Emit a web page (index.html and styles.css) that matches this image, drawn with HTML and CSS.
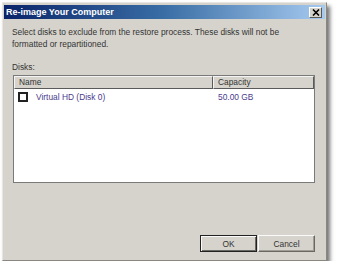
FILE: index.html
```html
<!DOCTYPE html>
<html lang="en">
<head>
  <meta charset="UTF-8">
  <title>Re-image Your Computer</title>
  <link rel="stylesheet" href="styles.css">
</head>
<body>

  <div class="dialog">
    <div class="titlebar">
      <span class="title">Re-image Your Computer</span>
      <button class="close" aria-label="Close">
        <svg width="8" height="7" viewBox="0 0 8 7"><path d="M1 0.5 L7 6.5 M7 0.5 L1 6.5" stroke="#000" stroke-width="1.6"/></svg>
      </button>
    </div>

    <div class="content">
      <p class="intro">Select disks to exclude from the restore process. These disks will not be formatted or repartitioned.</p>

      <p class="label">Disks:</p>

      <div class="listview">
        <div class="header">
          <div class="col name">Name</div>
          <div class="col capacity">Capacity</div>
        </div>
        <div class="row">
          <div class="cell name"><span class="check"></span>Virtual HD (Disk 0)</div>
          <div class="cell capacity">50.00 GB</div>
        </div>
      </div>

      <div class="buttons">
        <button class="btn default">OK</button>
        <button class="btn">Cancel</button>
      </div>
    </div>
  </div>

</body>
</html>
```

FILE: styles.css
```css
/* General Reset */
* {
  margin: 0;
  padding: 0;
  box-sizing: border-box;
}

body {
  font-family: 'Liberation Sans', Arial, sans-serif;
  font-size: 8.4px;
  color: #222;
  background-color: #fff;
  padding: 2px 0 0 2px;
}

/* Dialog frame */
.dialog {
  width: 325px;
  height: 259px;
  background-color: #d6d3cd;
  border: 1px solid #8a8780;
  border-top-color: #e8e6e2;
  border-left-color: #e8e6e2;
  box-shadow: 3px 4px 4px rgba(0, 0, 0, 0.55);
  padding: 1px;
  display: flex;
  flex-direction: column;
}

.titlebar {
  height: 14px;
  margin-top: 1px;
  background: linear-gradient(to right, #0a246a, #3a6ea5 50%, #a6caf0);
  display: flex;
  align-items: center;
  justify-content: space-between;
  padding: 0 3px 0 2px;
}

.title {
  color: #fff;
  font-weight: bold;
  font-size: 9px;
}

.close {
  width: 13px;
  height: 11px;
  background-color: #d6d3cd;
  border: 1px solid #5a5852;
  border-top-color: #fff;
  border-left-color: #fff;
  display: flex;
  align-items: center;
  justify-content: center;
}

/* Content */
.content {
  flex: 1;
  padding: 7px 9px 7px 8px;
  display: flex;
  flex-direction: column;
}

.intro {
  line-height: 12px;
  padding-right: 24px;
  color: #333;
}

.label {
  margin-top: 11px;
  line-height: 12px;
  color: #333;
}

.listview {
  margin-top: 2px;
  margin-left: 1px;
  margin-right: 1px;
  height: 108px;
  background-color: #fff;
  border: 1px solid #7a7a7a;
}

.header {
  display: flex;
  height: 13px;
}

.header .col {
  background-color: #d6d3cd;
  border: 1px solid #808080;
  border-top-color: #f4f4f4;
  border-left-color: #f4f4f4;
  border-right-color: #5a5a5a;
  border-bottom-color: #5a5a5a;
  padding-left: 4px;
  line-height: 11px;
  color: #333;
}

.name {
  width: 199px;
}

.capacity {
  flex: 1;
}

.row {
  display: flex;
  height: 16px;
  align-items: center;
  color: #4a3c8c;
}

.cell.name {
  display: flex;
  align-items: center;
  padding-left: 4px;
}

.cell.capacity {
  padding-left: 5px;
}

.check {
  width: 10px;
  height: 10px;
  border: 2px solid #222;
  background-color: #fff;
  margin-right: 8px;
}

/* Buttons */
.buttons {
  margin-top: auto;
  display: flex;
  justify-content: flex-end;
  gap: 1px;
  padding-right: 1px;
}

.btn {
  width: 57px;
  height: 17px;
  font-family: 'Liberation Sans', Arial, sans-serif;
  font-size: 8.4px;
  color: #333;
  background-color: #d6d3cd;
  border: 1px solid #6a6862;
  border-top-color: #fafafa;
  border-left-color: #fafafa;
  box-shadow: inset -1px -1px 0 #a09d96;
}

.btn.default {
  border: 1px solid #222;
  box-shadow: inset 1px 1px 0 #fafafa, inset -1px -1px 0 #6a6862;
}
```
